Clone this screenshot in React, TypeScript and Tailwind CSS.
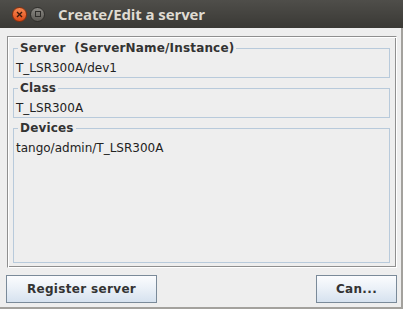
import React from "react";

const font = { fontFamily: '"DejaVu Sans", Verdana, sans-serif' };

function Box({ title, value, grow }: { title: string; value: string; grow?: boolean }) {
  return (
    <fieldset
      className={`border border-[#b8cadb] pl-[2px] pt-[6px] pb-[2px] pr-[2px] min-w-0 ${grow ? "flex-1" : ""}`}
    >
      <legend className="ml-[2px] px-[2px] text-[12px] leading-[14px] font-bold text-[#333333] whitespace-pre tracking-[0.17px]">
        {title}
      </legend>
      <div className="text-[12px] leading-[14px] text-[#222222] whitespace-pre">{value}</div>
    </fieldset>
  );
}

function Btn({ label, w }: { label: string; w: string }) {
  return (
    <div
      className={`${w} h-[28px] flex items-center justify-center border border-[#7a8a99] bg-gradient-to-b from-[#fbfcfe] via-[#eaf0f7] to-[#d6e2ef] text-[12px] font-bold text-[#333333] tracking-[0.33px]`}
    >
      {label}
    </div>
  );
}

export default function App() {
  return (
    <div className="w-[403px] h-[309px] flex flex-col bg-[#a3a19d]" style={font}>
      {/* title bar */}
      <div className="h-[28px] shrink-0 flex items-center bg-gradient-to-b from-[#4f4e4a] to-[#3a3935]">
        <div className="ml-[12px] w-[15px] h-[15px] rounded-full bg-gradient-to-b from-[#f7874f] to-[#df4a16] border border-[#8c2f0c] flex items-center justify-center">
          <svg width="7" height="7" viewBox="0 0 7 7">
            <path d="M1 1 L6 6 M6 1 L1 6" stroke="#3b1a0c" strokeWidth="1.4" />
          </svg>
        </div>
        <div className="ml-[3px] w-[15px] h-[15px] rounded-full bg-gradient-to-b from-[#8a8883] to-[#5d5b56] border border-[#2f2e2b] flex items-center justify-center">
          <div className="w-[6px] h-[6px] border border-[#2e2d2a]" />
        </div>
        <div
          className="ml-[13px] text-[15px] font-bold text-[#dfdbd2] tracking-[-0.1px]"
          style={{ fontFamily: '"Open Sans", "DejaVu Sans", sans-serif' }}
        >
          Create/Edit a server
        </div>
      </div>
      {/* body */}
      <div className="flex-1 flex flex-col bg-[#eeeeee] mr-[2px] mb-[2px] pt-[8px] pl-[7px] pr-[4px]">
        <div className="h-[232px] flex flex-col border-t border-l border-[#8f8f8f] border-r border-b border-r-[#ffffff] border-b-[#ffffff] shadow-[inset_1px_1px_0_#ffffff,inset_-1px_-1px_0_#8f8f8f] pl-[5px] pr-[6px] pt-[4px] pb-[4px] gap-[3px]">
          <Box title="Server  (ServerName/Instance)" value="T_LSR300A/dev1" />
          <Box title="Class" value="T_LSR300A" />
          <Box title="Devices" value="tango/admin/T_LSR300A" grow />
        </div>
        <div className="flex justify-between mt-[7px] -ml-[1px]">
          <Btn label="Register server" w="w-[151px]" />
          <Btn label="Can..." w="w-[81px]" />
        </div>
      </div>
    </div>
  );
}
